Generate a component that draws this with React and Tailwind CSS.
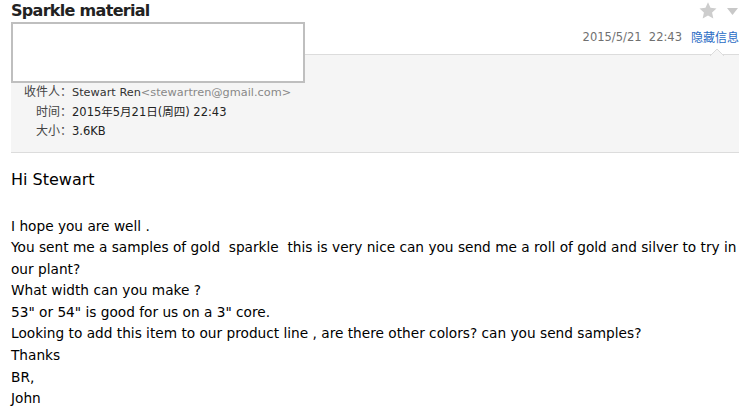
export default function App() {
  const body = [
    "I hope you are well .",
    "You sent me a samples of gold  sparkle  this is very nice can you send me a roll of gold and silver to try in",
    "our plant?",
    "What width can you make ?",
    '53" or 54" is good for us on a 3" core.',
    "Looking to add this item to our product line , are there other colors? can you send samples?",
    "Thanks",
    "BR,",
    "John",
  ];

  return (
    <div className="w-[754px] h-[413px] overflow-hidden bg-white text-black font-['DejaVu_Sans','Noto_Sans_CJK_SC',sans-serif]">
      <div className="pl-[11px] pr-[15px]">
        <div className="flex justify-between">
          <div>
            <h1 className="h-[22px] text-[16px] leading-[22px] font-bold tracking-[-0.7px] text-[#222]">Sparkle material</h1>
            <div className="relative z-10 w-[294px] h-[61px] border-2 border-[#bfbfbf] bg-white"></div>
          </div>
          <div className="flex flex-col items-end">
            <div className="flex items-center h-[22px] gap-[10px] pr-[1px]">
              <svg width="18" height="17" viewBox="0 0 24 23" className="mt-[-1px]">
                <path d="M12 0.5l3.4 7.4 8.1 0.9-6 5.5 1.7 8-7.2-4.1-7.2 4.1 1.7-8-6-5.5 8.1-0.9z" fill="#cdcdcd" />
              </svg>
              <svg width="11" height="7" viewBox="0 0 11 7">
                <path d="M0 0h11L5.5 7z" fill="#c8c8c8" />
              </svg>
            </div>
            <div className="flex items-center gap-[9px] h-[32px] text-[12px]">
              <span className="text-[11.5px] text-[#707070] whitespace-pre">2015/5/21  22:43</span>
              <span className="text-[#2a6cc4]">隐藏信息</span>
            </div>
          </div>
        </div>

        <div className="relative -mt-[29px] bg-[#f5f5f5] border-t border-b border-[#dcdcdc] pt-[28px] pb-[10px] text-[12px] leading-[19.5px]">
          <svg width="14" height="8" viewBox="0 0 14 8" className="absolute -top-[7px] right-[15px]">
            <path d="M0 8L7 1L14 8" fill="#f5f5f5" stroke="#dcdcdc" strokeWidth="1" />
          </svg>
          <div className="flex">
            <span className="w-[61px] text-right text-[#444]">收件人：</span>
            <span className="text-[11.3px] text-[#333]">Stewart Ren</span>
            <span className="text-[11.3px] text-[#888]">&lt;stewartren@gmail.com&gt;</span>
          </div>
          <div className="flex">
            <span className="w-[61px] text-right text-[#444]">时间：</span>
            <span className="text-[11.5px] text-[#222]">2015年5月21日(周四) 22:43</span>
          </div>
          <div className="flex">
            <span className="w-[61px] text-right text-[#444]">大小：</span>
            <span className="text-[11.5px] text-[#222]">3.6KB</span>
          </div>
        </div>

        <div className="pt-[16px] text-[13.7px] leading-[21.6px]">
          <p className="text-[16px] leading-[22px]">Hi Stewart</p>
          <div className="h-[25px]"></div>
          {body.map((line, i) => (
            <p key={i} className="whitespace-pre">{line}</p>
          ))}
        </div>
      </div>
    </div>
  );
}
